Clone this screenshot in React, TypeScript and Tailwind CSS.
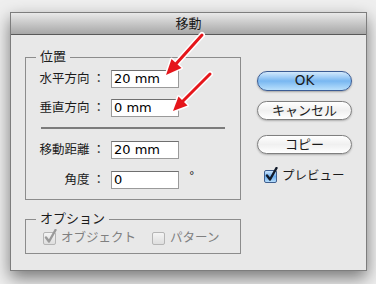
import React from 'react';

const Field = ({ label, value, unit }: { label: string; value: string; unit?: string }) => (
  <div className="flex items-center">
    <span className="w-[79px] flex justify-end text-[12.5px] leading-[18px]">
      <span>{label}</span>
      <span className="ml-[3px]">：</span>
    </span>
    <div className="ml-[6px] w-[68px] h-[18px] bg-white border border-[#9a9a9a] border-t-[#6f6f6f] pl-[2px] text-[13px] leading-[16px] text-black">
      {value}
    </div>
    {unit && <span className="ml-[10px] -mt-[8px] text-[11px]">{unit}</span>}
  </div>
);

const Check = ({ checked, disabled }: { checked?: boolean; disabled?: boolean }) => (
  <div className="relative w-[13px] h-[13px]">
    <div
      className={
        disabled
          ? 'w-[13px] h-[13px] rounded-[2px] border border-[#b5b5b5] bg-linear-to-b from-[#f4f4f4] to-[#dedede]'
          : 'w-[13px] h-[13px] rounded-[2px] border border-[#3f5f8f] bg-linear-to-b from-[#cfe6fb] via-[#6aaef0] to-[#b6dcfa]'
      }
    />
    {checked && (
      <svg className="absolute left-[1px] -top-[3px]" width="13" height="15" viewBox="0 0 13 15">
        <path
          d="M2 8.5 L5 12.5 L11.5 1"
          fill="none"
          stroke={disabled ? '#9a9a9a' : '#111a2a'}
          strokeWidth="2.4"
          strokeLinecap="round"
          strokeLinejoin="round"
        />
      </svg>
    )}
  </div>
);

const Arrow = ({ d, head }: { d: string; head: string }) => (
  <g>
    <path d={d} stroke="white" strokeWidth="6" strokeLinecap="round" />
    <polygon points={head} fill="white" stroke="white" strokeWidth="3" strokeLinejoin="round" />
    <path d={d} stroke="#e5161b" strokeWidth="3" strokeLinecap="round" />
    <polygon points={head} fill="#e5161b" />
  </g>
);

export default function App() {
  return (
    <div className="relative w-[376px] h-[284px] overflow-hidden bg-[#efefef] font-['DejaVu_Sans','Noto_Sans_CJK_JP',sans-serif] text-[#1b1b1b]">
      <div className="pl-[10px] pt-[12px]">
        <div className="w-[357px] h-[259px] flex flex-col bg-[#e8e8e8] border border-[#7d7d7d] shadow-[0_7px_16px_rgba(0,0,0,0.5)]">
          {/* title bar */}
          <div className="h-[22px] shrink-0 flex items-center justify-center border-b border-[#595959] bg-linear-to-b from-[#e9e9e9] to-[#a7a7a7] text-[13px] leading-none">
            移動
          </div>

          <div className="flex pt-[14px]">
            {/* left column */}
            <div className="ml-[14px] w-[216px]">
              <fieldset className="border border-[#8c8c8c] pb-[10px]">
                <legend className="ml-[10px] px-[4px] text-[13px] leading-[16px]">位置</legend>
                <div className="mt-[5px]">
                  <Field label="水平方向" value="20 mm" />
                </div>
                <div className="mt-[11px]">
                  <Field label="垂直方向" value="0 mm" />
                </div>
                <div className="mx-[15px] mt-[10px] h-[2px] bg-[#7c7c7c]" />
                <div className="mt-[12px]">
                  <Field label="移動距離" value="20 mm" />
                </div>
                <div className="mt-[12px]">
                  <Field label="角度" value="0" unit="°" />
                </div>
              </fieldset>

              <fieldset className="mt-[11px] border border-[#8c8c8c] pb-[7px]">
                <legend className="ml-[10px] px-[4px] text-[13px] leading-[16px]">オプション</legend>
                <div className="mt-[3px] h-[16px] flex items-center text-[12.5px] text-[#808080]">
                  <div className="ml-[17px]">
                    <Check checked disabled />
                  </div>
                  <span className="ml-[5px]">オブジェクト</span>
                  <div className="ml-[16px]">
                    <Check disabled />
                  </div>
                  <span className="ml-[5px]">パターン</span>
                </div>
              </fieldset>
            </div>

            {/* right column */}
            <div className="ml-[16px] flex flex-col">
              <button className="mt-[22px] w-[95px] h-[20px] rounded-full border border-[#3b5c94] bg-linear-to-b from-[#d3e9fc] via-[#78b7f1] to-[#b9e0fc] text-[13.5px] leading-none shadow-[0_1px_2px_rgba(0,0,0,0.3)]">
                OK
              </button>
              <button className="mt-[10px] w-[95px] h-[19px] rounded-full border border-[#7f7f7f] bg-linear-to-b from-white via-[#f0f0f0] to-white text-[13px] leading-none shadow-[0_1px_2px_rgba(0,0,0,0.25)]">
                キャンセル
              </button>
              <button className="mt-[15px] w-[95px] h-[19px] rounded-full border border-[#7f7f7f] bg-linear-to-b from-white via-[#f0f0f0] to-white text-[13px] leading-none shadow-[0_1px_2px_rgba(0,0,0,0.25)]">
                コピー
              </button>
              <div className="mt-[13px] ml-[7px] flex items-center text-[12.5px]">
                <Check checked />
                <span className="ml-[5px]">プレビュー</span>
              </div>
            </div>
          </div>
        </div>
      </div>

      {/* annotation arrows */}
      <svg className="absolute inset-0 pointer-events-none" width="376" height="284" viewBox="0 0 376 284">
        <Arrow d="M202 35 L175 65" head="166,75 181.5,68 171.5,59" />
        <Arrow d="M210 74 L182 102" head="173,111 187.5,105.5 178.5,96.5" />
      </svg>
    </div>
  );
}
